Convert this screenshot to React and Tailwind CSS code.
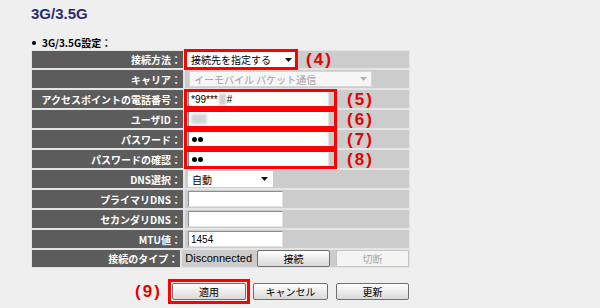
const jp = "font-['Noto_Sans_CJK_JP','Liberation_Sans',sans-serif]";

function Arrow({ disabled }) {
  return (
    <svg width="7" height="4" viewBox="0 0 7 4" className="shrink-0">
      <path d="M0 0h7L3.5 4z" fill={disabled ? '#b0b0b0' : '#111'} />
    </svg>
  );
}

function Mark({ n, className = '' }) {
  return (
    <span
      className={`font-['Liberation_Sans',sans-serif] text-[17px] font-bold leading-none tracking-[2px] text-[#e60000] ${className}`}
    >
      ({n})
    </span>
  );
}

function RedBox({ children, className = '' }) {
  return (
    <div className={`relative ${className}`}>
      {children}
      <div className="pointer-events-none absolute -left-[1px] -top-[2px] -bottom-[2px] right-0 border-[3px] border-[#ff0000]" />
    </div>
  );
}

function TextBox({ width = 'w-[95px]', children }) {
  return (
    <div
      className={`flex h-[16px] ${width} items-center border border-t-[#8c8c8c] border-l-[#8c8c8c] border-r-[#e4e4e4] border-b-[#e4e4e4] bg-white px-[2px] text-[10px] text-black`}
    >
      {children}
    </div>
  );
}

function Dots() {
  return (
    <span className="flex gap-[1px] pl-[1px]">
      <span className="h-[5px] w-[5px] rounded-full bg-black" />
      <span className="h-[5px] w-[5px] rounded-full bg-black" />
    </span>
  );
}

function Row({ label, children, h = 'h-[18px]' }) {
  return (
    <div className={`flex ${h} gap-[2px]`}>
      <div
        className={`flex w-[151px] items-center justify-end bg-[#5c5c5c] pr-[2px] text-[10px] font-bold text-white ${jp}`}
      >
        {label}
      </div>
      <div className={`flex flex-1 items-center bg-[#cccccc] pl-[3px] ${jp}`}>{children}</div>
    </div>
  );
}

function Btn({ children, disabled, w = 'w-[74px]' }) {
  return (
    <div
      className={`flex h-[17px] ${w} items-center justify-center rounded-[2px] border text-[10px] ${jp} ${
        disabled
          ? 'border-[#c6c6c6] bg-[#f4f4f2] text-[#a8a8a8]'
          : 'border-[#707070] bg-gradient-to-b from-white to-[#d9d9d9] text-black'
      }`}
    >
      {children}
    </div>
  );
}

export default function App() {
  return (
    <div className="h-[308px] w-[600px] overflow-hidden bg-[#efefef]">
      <div className="pl-[31px] pt-[5px] font-['Liberation_Sans',sans-serif] text-[15px] font-bold leading-[18px] text-[#2b2d6e]">
        3G/3.5G
      </div>

      <div className={`mt-[15px] flex items-center pl-[32px] text-[10px] font-bold leading-[10px] text-black ${jp}`}>
        <span className="mr-[6px] h-[4px] w-[4px] rounded-full bg-black" />
        <span>3G/3.5G設定：</span>
      </div>

      <div className="ml-[31px] mt-[2px] flex w-[379px] flex-col gap-[2px] bg-[#e4e4e4] p-px">
        <Row label="接続方法：" h="h-[17px]">
          <RedBox className="-ml-[3px]">
            <div className="flex h-[17px] w-[113px] items-center justify-between bg-white pl-[6px] pr-[6px] text-[10px] text-black">
              <span>接続先を指定する</span>
              <Arrow />
            </div>
          </RedBox>
          <Mark n="4" className="ml-[8px]" />
        </Row>

        <Row label="キャリア：">
          <div className="ml-[1px] flex h-[16px] w-[183px] items-center justify-between border border-[#d6d6d6] bg-[#f6f6f6] pl-[4px] pr-[4px] text-[10px] text-[#a0a0a0]">
            <span>イーモバイル パケット通信</span>
            <Arrow disabled />
          </div>
        </Row>

        <Row label="アクセスポイントの電話番号：">
          <RedBox className="-ml-[3px] w-[152px] pl-[3px]">
            <TextBox width="w-[141px]">
              <span className="font-['Liberation_Sans',sans-serif]">*99***</span>
              <span className="mx-[1px] h-[11px] w-[7px] bg-[#d0d0d0] blur-[1px]" />
              <span className="font-['Liberation_Sans',sans-serif]">#</span>
            </TextBox>
          </RedBox>
          <Mark n="5" className="ml-[10px]" />
        </Row>

        <Row label="ユーザID：">
          <RedBox className="-ml-[3px] w-[152px] pl-[3px]">
            <TextBox width="w-[141px]">
              <span className="h-[10px] w-[16px] bg-[#d4d4d4] blur-[1.5px]" />
            </TextBox>
          </RedBox>
          <Mark n="6" className="ml-[10px]" />
        </Row>

        <Row label="パスワード：">
          <RedBox className="-ml-[3px] w-[152px] pl-[3px]">
            <TextBox width="w-[141px]">
              <Dots />
            </TextBox>
          </RedBox>
          <Mark n="7" className="ml-[10px]" />
        </Row>

        <Row label="パスワードの確認：">
          <RedBox className="-ml-[3px] w-[152px] pl-[3px]">
            <TextBox width="w-[141px]">
              <Dots />
            </TextBox>
          </RedBox>
          <Mark n="8" className="ml-[10px]" />
        </Row>

        <Row label="DNS選択：">
          <div className="flex h-[16px] w-[85px] items-center justify-between bg-white pl-[4px] pr-[5px] text-[10px] text-black">
            <span>自動</span>
            <Arrow />
          </div>
        </Row>

        <Row label="プライマリDNS：">
          <TextBox />
        </Row>

        <Row label="セカンダリDNS：">
          <TextBox />
        </Row>

        <Row label="MTU値：">
          <TextBox>
            <span className="font-['Liberation_Sans',sans-serif]">1454</span>
          </TextBox>
        </Row>

        <Row label="接続のタイプ：" h="h-[17px]">
          <span className="font-['Liberation_Sans',sans-serif] text-[11px] text-black">Disconnected</span>
          <div className="ml-[5px] flex gap-[6px]">
            <Btn w="w-[73px]">接続</Btn>
            <Btn disabled w="w-[73px]">切断</Btn>
          </div>
        </Row>
      </div>

      <div className="mt-[11px] flex items-center pl-[135px]">
        <Mark n="9" className="w-[33px] tracking-[1px]" />
        <div className="border-[3px] border-[#ff0000] p-[1px]">
          <Btn>適用</Btn>
        </div>
        <div className="ml-[3px]">
          <Btn w="w-[75px]">キャンセル</Btn>
        </div>
        <div className="ml-[8px]">
          <Btn w="w-[73px]">更新</Btn>
        </div>
      </div>
    </div>
  );
}
